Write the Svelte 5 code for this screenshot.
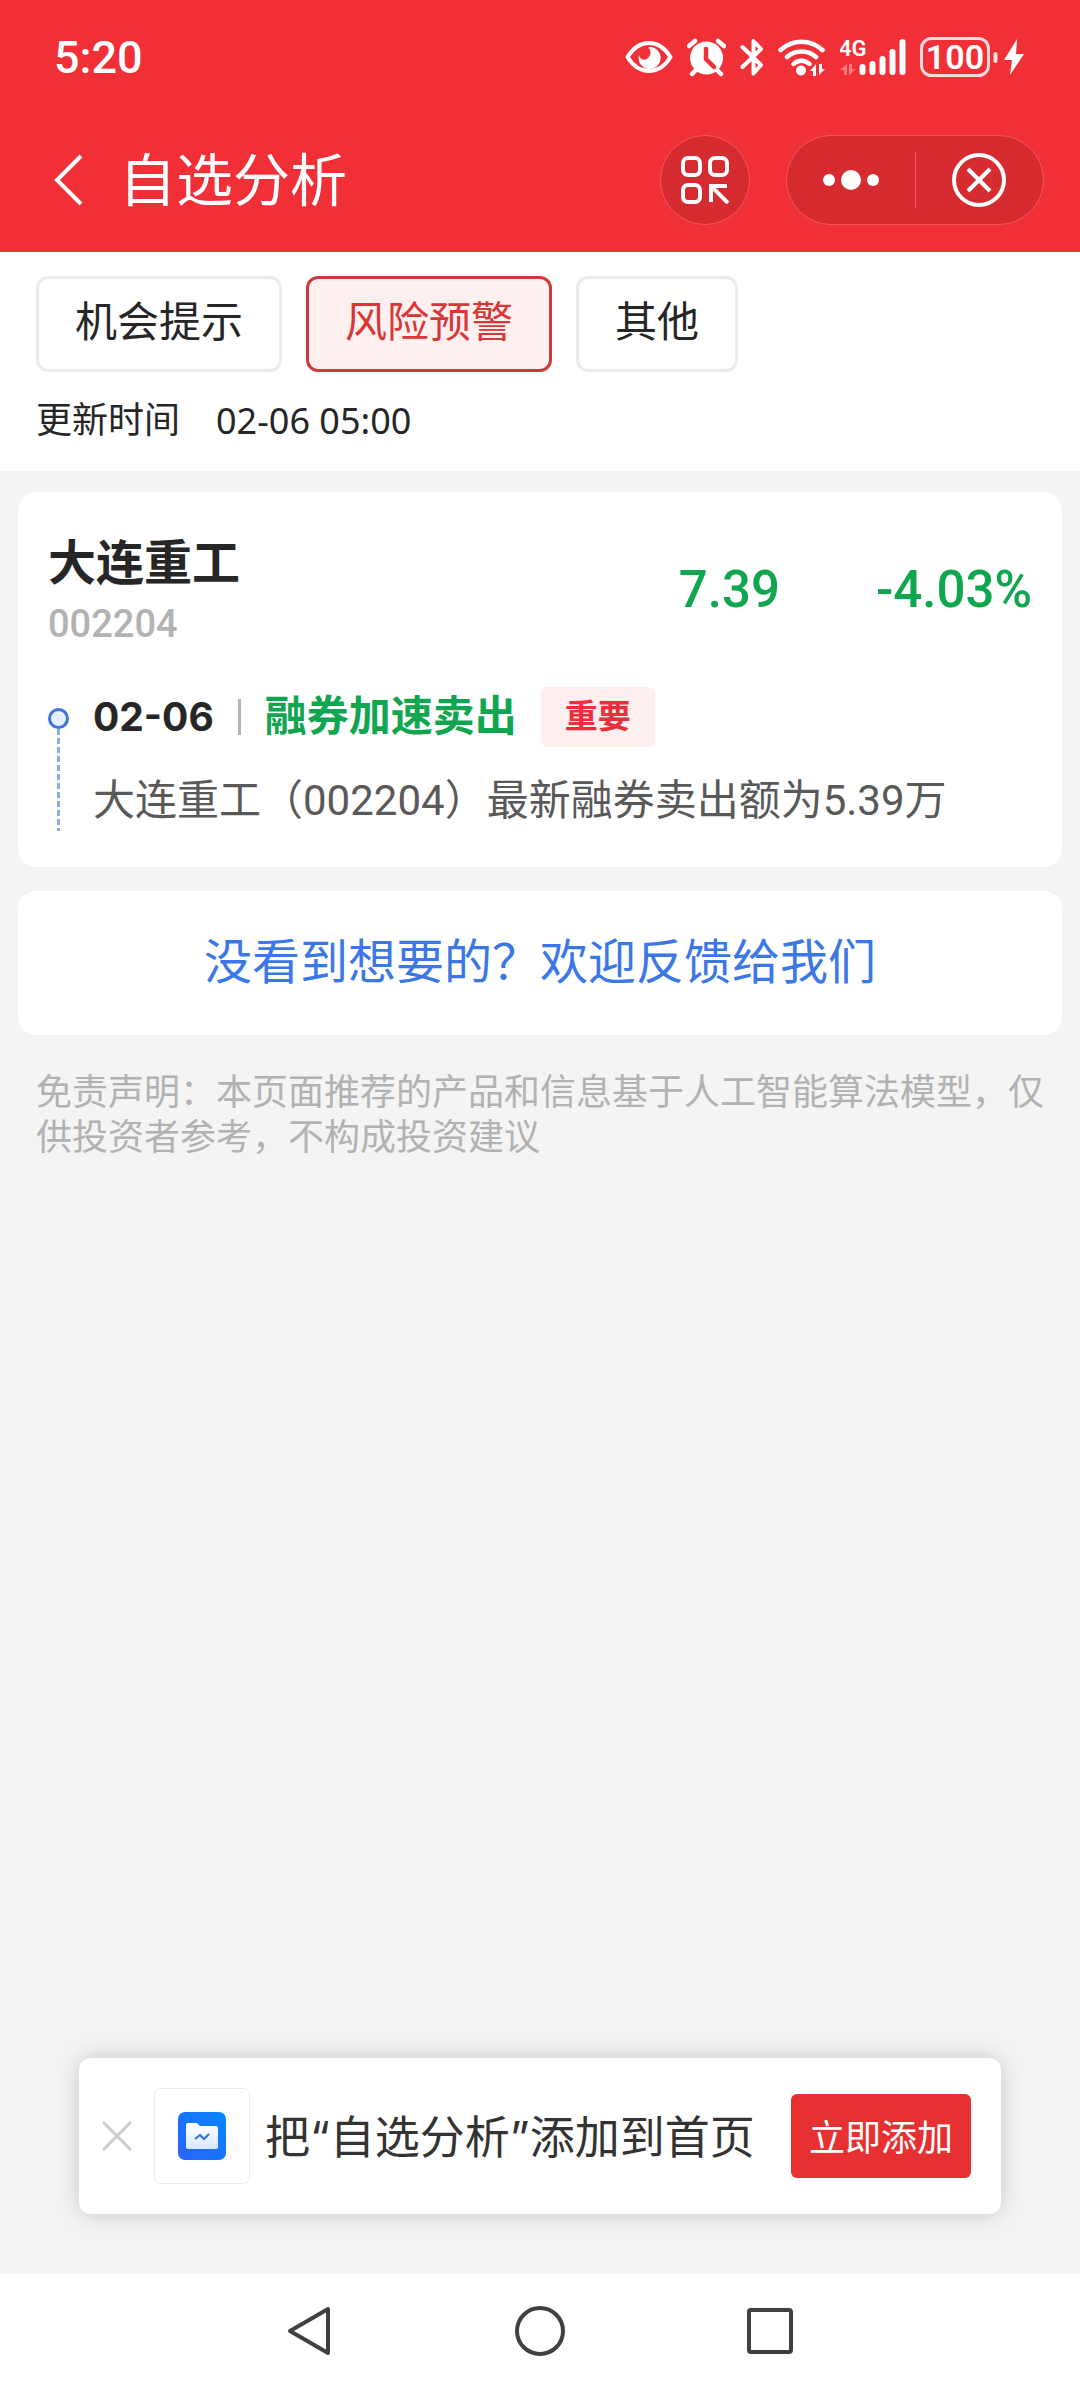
<script lang="ts">
interface Tab {
  id: string
  label: string
}

interface StockEvent {
  date: string
  title: string
  level: string
  detail: string
}

interface Stock {
  name: string
  code: string
  price: string
  change: string
  events: StockEvent[]
}

const tabs: Tab[] = [
  { id: 'chance', label: '机会提示' },
  { id: 'risk', label: '风险预警' },
  { id: 'other', label: '其他' },
]

const stocks: Stock[] = [
  {
    name: '大连重工',
    code: '002204',
    price: '7.39',
    change: '-4.03%',
    events: [
      {
        date: '02-06',
        title: '融券加速卖出',
        level: '重要',
        detail: '大连重工（002204）最新融券卖出额为5.39万',
      },
    ],
  },
]

let activeTab = $state('risk')
let showPrompt = $state(true)
</script>

<div class="page">
  <header>
    <div class="status-bar">
      <span class="clock">5:20</span>
      <div class="status-icons">
        <svg width="48" height="40" viewBox="0 0 48 40" aria-hidden="true">
          <path d="M2.5 20C8 11 15 6 24 6s16 5 21.500 14C40 29 33 34 24 34S8 29 2.500 20z" fill="none" stroke="#fff" stroke-width="4" stroke-linejoin="round" />
          <path d="M25 10a11 11 0 1 1-11 8c1 5 6 6 9 3s4-7 0-10.500z" fill="#fff" />
        </svg>
        <svg width="39" height="40" viewBox="0 0 39 40" aria-hidden="true">
          <circle cx="19.5" cy="21" r="16.5" fill="#fff" />
          <path d="M2 9l6-5M37 9l-6-5M5 37l5-5M34 37l-5-5" stroke="#fff" stroke-width="4.5" stroke-linecap="round" />
          <path d="M19 12v10l8 8" fill="none" stroke="#f12f37" stroke-width="4.5" stroke-linecap="round" />
        </svg>
        <svg width="24" height="40" viewBox="0 0 24 40" aria-hidden="true">
          <path d="M2.5 10L21 28l-7.500 8.500v-13M13.500 16.500V4L21 12 2.500 30" fill="none" stroke="#fff" stroke-width="4" stroke-linejoin="round" stroke-linecap="round" />
        </svg>
        <svg width="48" height="40" viewBox="0 0 48 40" aria-hidden="true">
          <path d="M2.500 13c12-11 30-11 42 0M9 20c8-7.500 21-7.500 29 0M15.500 27c4.500-4.500 11.500-4.500 16 0" fill="none" stroke="#fff" stroke-width="4.5" stroke-linecap="round" />
          <circle cx="23" cy="33.5" r="5" fill="#fff" />
          <path d="M32 34l6-7v12h-3v-5zM47 32l-6 6V27h3v5z" fill="#fff" />
        </svg>
        <svg width="66" height="40" viewBox="0 0 66 40" aria-hidden="true">
          <text class="network" x="-1" y="19">4G</text>
          <path d="M0 33l7-6v11H4v-5zM16 32l-7 6V27h3v5z" fill="#ff7a80" />
          <path d="M22.500 30v5M32.500 27v8M42.500 22v13M52.500 15v20M62.500 5v30" stroke="#fff" stroke-width="6" stroke-linecap="round" />
        </svg>
        <svg width="78" height="40" viewBox="0 0 78 40" aria-hidden="true">
          <rect x="1.5" y="1.5" width="67" height="37" rx="10" fill="none" stroke="#ffd9db" stroke-width="3" />
          <path d="M75.500 17v7" stroke="#ffe3e4" stroke-width="4" stroke-linecap="round" />
          <text class="battery" x="35" y="32" text-anchor="middle">100</text>
        </svg>
        <svg class="bolt" width="20" height="40" viewBox="0 0 20 40" aria-hidden="true">
          <path d="M13 2L0 23h8L6 38 20 17h-8z" fill="#fff" />
        </svg>
      </div>
    </div>

    <div class="title-bar">
      <button class="back" aria-label="返回">
        <svg width="30" height="52" viewBox="0 0 30 52"><path d="M27 2L3 26l24 24" fill="none" stroke="#fff" stroke-width="4" /></svg>
      </button>
      <h1>自选分析</h1>
      <button class="scan" aria-label="扫码">
        <svg width="48" height="48" viewBox="0 0 48 48" fill="none" stroke="#fff" stroke-width="4">
          <rect x="2" y="2" width="17" height="17" rx="5" />
          <rect x="29" y="2" width="17" height="17" rx="5" />
          <rect x="2" y="29" width="17" height="17" rx="5" />
          <path d="M30 46V30h16M30 30l17 17" />
        </svg>
      </button>
      <div class="capsule">
        <button aria-label="更多">
          <svg width="56" height="20" viewBox="0 0 56 20" fill="#fff">
            <circle cx="6" cy="10" r="6" />
            <circle cx="28" cy="10" r="10" />
            <circle cx="50" cy="10" r="6" />
          </svg>
        </button>
        <span class="divider"></span>
        <button aria-label="关闭">
          <svg width="54" height="54" viewBox="0 0 54 54" fill="none" stroke="#fff" stroke-width="4">
            <circle cx="27" cy="27" r="25" />
            <path d="M16 16l22 22M38 16L16 38" />
          </svg>
        </button>
      </div>
    </div>
  </header>

  <section class="filters">
    <div class="tabs">
      {#each tabs as tab (tab.id)}
        <button class="tab" class:active={activeTab === tab.id} onclick={() => (activeTab = tab.id)}>
          {tab.label}
        </button>
      {/each}
    </div>
    <p class="updated"><span>更新时间</span><time>02-06 05:00</time></p>
  </section>

  <main>
    {#each stocks as stock (stock.code)}
      <article class="card">
        <div class="quote">
          <div>
            <h2>{stock.name}</h2>
            <div class="code">{stock.code}</div>
          </div>
          <span class="price">{stock.price}</span>
          <span class="change">{stock.change}</span>
        </div>
        {#each stock.events as event (event.title)}
          <div class="event">
            <div class="marker">
              <span class="dot"></span>
              <span class="line"></span>
            </div>
            <div>
              <div class="event-head">
                <time>{event.date}</time>
                <span class="bar"></span>
                <h3>{event.title}</h3>
                <span class="level">{event.level}</span>
              </div>
              <p>{event.detail}</p>
            </div>
          </div>
        {/each}
      </article>
    {/each}

    <a class="feedback" href="#feedback">没看到想要的？欢迎反馈给我们</a>

    <p class="disclaimer">免责声明：本页面推荐的产品和信息基于人工智能算法模型，仅供投资者参考，不构成投资建议</p>

    {#if showPrompt}
      <aside class="prompt">
        <button class="dismiss" aria-label="关闭提示" onclick={() => (showPrompt = false)}>
          <svg width="30" height="30" viewBox="0 0 30 30"><path d="M1 1l28 28M29 1L1 29" stroke="#ccc" stroke-width="3" /></svg>
        </button>
        <div class="app-icon">
          <svg width="48" height="48" viewBox="0 0 48 48" aria-hidden="true">
            <defs>
              <linearGradient id="tile" x1="0" y1="1" x2="1" y2="0">
                <stop offset="0" stop-color="#2b62ff" />
                <stop offset="1" stop-color="#0587ff" />
              </linearGradient>
              <linearGradient id="folder" x1="0" y1="0" x2="0" y2="1">
                <stop offset="0" stop-color="#fff" />
                <stop offset="1" stop-color="#d9e8ff" />
              </linearGradient>
            </defs>
            <rect width="48" height="48" rx="7" fill="url(#tile)" />
            <path d="M10 11h9l3 3h16a2 2 0 0 1 2 2v19a2 2 0 0 1-2 2H10a2 2 0 0 1-2-2V13a2 2 0 0 1 2-2z" fill="url(#folder)" />
            <path d="M17 27l5-4 4 4 5-5" fill="none" stroke="#2b6de0" stroke-width="2" />
          </svg>
        </div>
        <p>把“自选分析”添加到首页</p>
        <button class="add">立即添加</button>
      </aside>
    {/if}
  </main>

  <nav>
    <button aria-label="后退">
      <svg width="50" height="50" viewBox="0 0 50 50"><path d="M5 25L43 3v44z" /></svg>
    </button>
    <button aria-label="主页">
      <svg width="50" height="50" viewBox="0 0 50 50"><circle cx="25" cy="25" r="23" /></svg>
    </button>
    <button aria-label="最近任务">
      <svg width="50" height="50" viewBox="0 0 50 50"><rect x="4" y="4" width="42" height="42" rx="2" /></svg>
    </button>
  </nav>
</div>

<style>
  :global(body) {
    background: #f4f4f4;
    font-family: Roboto, 'Noto Sans CJK SC', sans-serif;
  }

  .page {
    min-height: 100vh;
    display: flex;
    flex-direction: column;
    color: #262626;
  }

  h1,
  h2,
  h3,
  p {
    margin: 0;
  }

  button {
    padding: 0;
    border: none;
    background: none;
    font-family: inherit;
    color: inherit;
    cursor: pointer;
  }

  svg {
    display: block;
  }

  header {
    background: #f12f37;
    color: #fff;
  }

  .status-bar {
    height: 114px;
    padding: 0 56px 0 54px;
    display: flex;
    align-items: center;
    justify-content: space-between;
  }

  .clock {
    font-size: 45px;
    font-weight: 500;
    line-height: 56px;
    padding-top: 2px;
  }

  .status-icons {
    display: flex;
    gap: 14px;
  }

  .network {
    fill: #fff;
    font-size: 22px;
    font-weight: 600;
  }

  .battery {
    fill: #fff;
    font-size: 34px;
    font-weight: 600;
  }

  .bolt {
    margin-left: -8px;
  }

  .title-bar {
    height: 132px;
    padding: 0 36px 6px 54px;
    display: flex;
    align-items: center;
  }

  .back {
    margin-right: 35px;
  }

  h1 {
    flex: 1;
    padding-top: 4px;
    font-size: 57px;
    font-weight: 400;
    line-height: 72px;
  }

  .scan,
  .capsule {
    box-sizing: border-box;
    height: 90px;
    border: 1px solid #f0565c;
    border-radius: 45px;
    background: #d62b30;
    display: flex;
    align-items: center;
    justify-content: center;
  }

  .scan {
    width: 90px;
    margin-right: 36px;
  }

  .capsule {
    width: 258px;
  }

  .capsule button {
    flex: 1;
    display: flex;
    justify-content: center;
  }

  .divider {
    width: 1px;
    height: 56px;
    background: #f0565c;
  }

  .filters {
    padding: 24px 36px 27px;
    background: #fff;
  }

  .tabs {
    display: flex;
    gap: 24px;
  }

  .tab {
    padding: 14px 36px 16px;
    border: 3px solid #ebebeb;
    border-radius: 12px;
    font-size: 42px;
    line-height: 60px;
  }

  .tab.active {
    border-color: #cb3b3e;
    background: #fff0f0;
    color: #d93638;
  }

  .updated {
    margin-top: 25px;
    display: flex;
    gap: 36px;
    font-size: 36px;
    line-height: 48px;
    margin-bottom: -1px;
  }

  .updated time {
    font-family: 'Noto Sans', sans-serif;
  }

  main {
    flex: 1;
    padding: 21px 18px 60px;
    display: flex;
    flex-direction: column;
  }

  .card {
    margin-bottom: 24px;
    padding: 42px 30px 36px;
    border-radius: 18px;
    background: #fff;
  }

  .quote {
    display: grid;
    grid-template-columns: 1fr auto 252px;
    align-items: center;
    color: #10a650;
    font-size: 51px;
    font-weight: 500;
    line-height: 60px;
  }

  .price,
  .change {
    padding-bottom: 8px;
  }

  h2 {
    color: #262626;
    font-size: 48px;
    font-weight: 700;
    line-height: 60px;
  }

  .code {
    color: #b2b2b2;
    font-size: 38px;
  }

  .change {
    text-align: right;
  }

  .event {
    margin-top: 33px;
    display: flex;
    gap: 24px;
  }

  .marker {
    width: 21px;
    padding-top: 21px;
    display: flex;
    flex-direction: column;
    align-items: center;
  }

  .dot {
    box-sizing: border-box;
    width: 21px;
    height: 21px;
    border: 3px solid #3e76de;
    border-radius: 50%;
    background: #e6f0ff;
  }

  .line {
    flex: 1;
    width: 3px;
    background: repeating-linear-gradient(#8bade3 0 6px, #fff 6px 9px);
  }

  .event-head {
    display: flex;
    align-items: center;
    gap: 24px;
    font-size: 42px;
    line-height: 60px;
  }

  .event-head time {
    font-family: Inter, sans-serif;
    font-size: 39px;
    font-weight: 700;
  }

  .bar {
    width: 3px;
    height: 36px;
    background: #b5b5b5;
  }

  h3 {
    color: #10a650;
    font-size: 42px;
    font-weight: 700;
  }

  .level {
    padding: 0 24px;
    border-radius: 6px;
    background: #fff0ef;
    color: #ee2e3b;
    font-size: 33px;
    font-weight: 700;
  }

  .event p {
    margin-top: 24px;
    color: #595959;
    font-size: 42px;
    line-height: 60px;
  }

  .feedback {
    padding: 42px 0;
    border-radius: 18px;
    background: #fff;
    color: #3b77e6;
    font-size: 48px;
    line-height: 60px;
    text-align: center;
    text-decoration: none;
  }

  .disclaimer {
    margin: 36px 18px;
    color: #b2b2b2;
    font-size: 36px;
    line-height: 45px;
  }

  .prompt {
    margin: auto 61px 0;
    padding: 30px 30px 30px 23px;
    border-radius: 12px;
    background: #fff;
    box-shadow: 0 0 24px rgba(0, 0, 0, 0.18);
    display: flex;
    align-items: center;
  }

  .app-icon {
    box-sizing: border-box;
    width: 96px;
    height: 96px;
    margin: 0 15px 0 22px;
    border: 1px solid #ebebeb;
    border-radius: 6px;
    display: grid;
    place-items: center;
  }

  .prompt p {
    flex: 1;
    padding-top: 4px;
    color: #333;
    font-family: Inter, 'Noto Sans CJK SC', sans-serif;
    font-size: 45px;
    line-height: 60px;
    white-space: nowrap;
  }

  .add {
    width: 180px;
    height: 84px;
    padding-bottom: 2px;
    border-radius: 6px;
    background: #e73031;
    color: #fff;
    font-size: 36px;
  }

  nav {
    height: 114px;
    background: #fff;
    display: flex;
    align-items: center;
    justify-content: center;
    gap: 180px;
  }

  nav svg {
    fill: none;
    stroke: #404040;
    stroke-width: 4;
    stroke-linejoin: round;
  }
</style>
